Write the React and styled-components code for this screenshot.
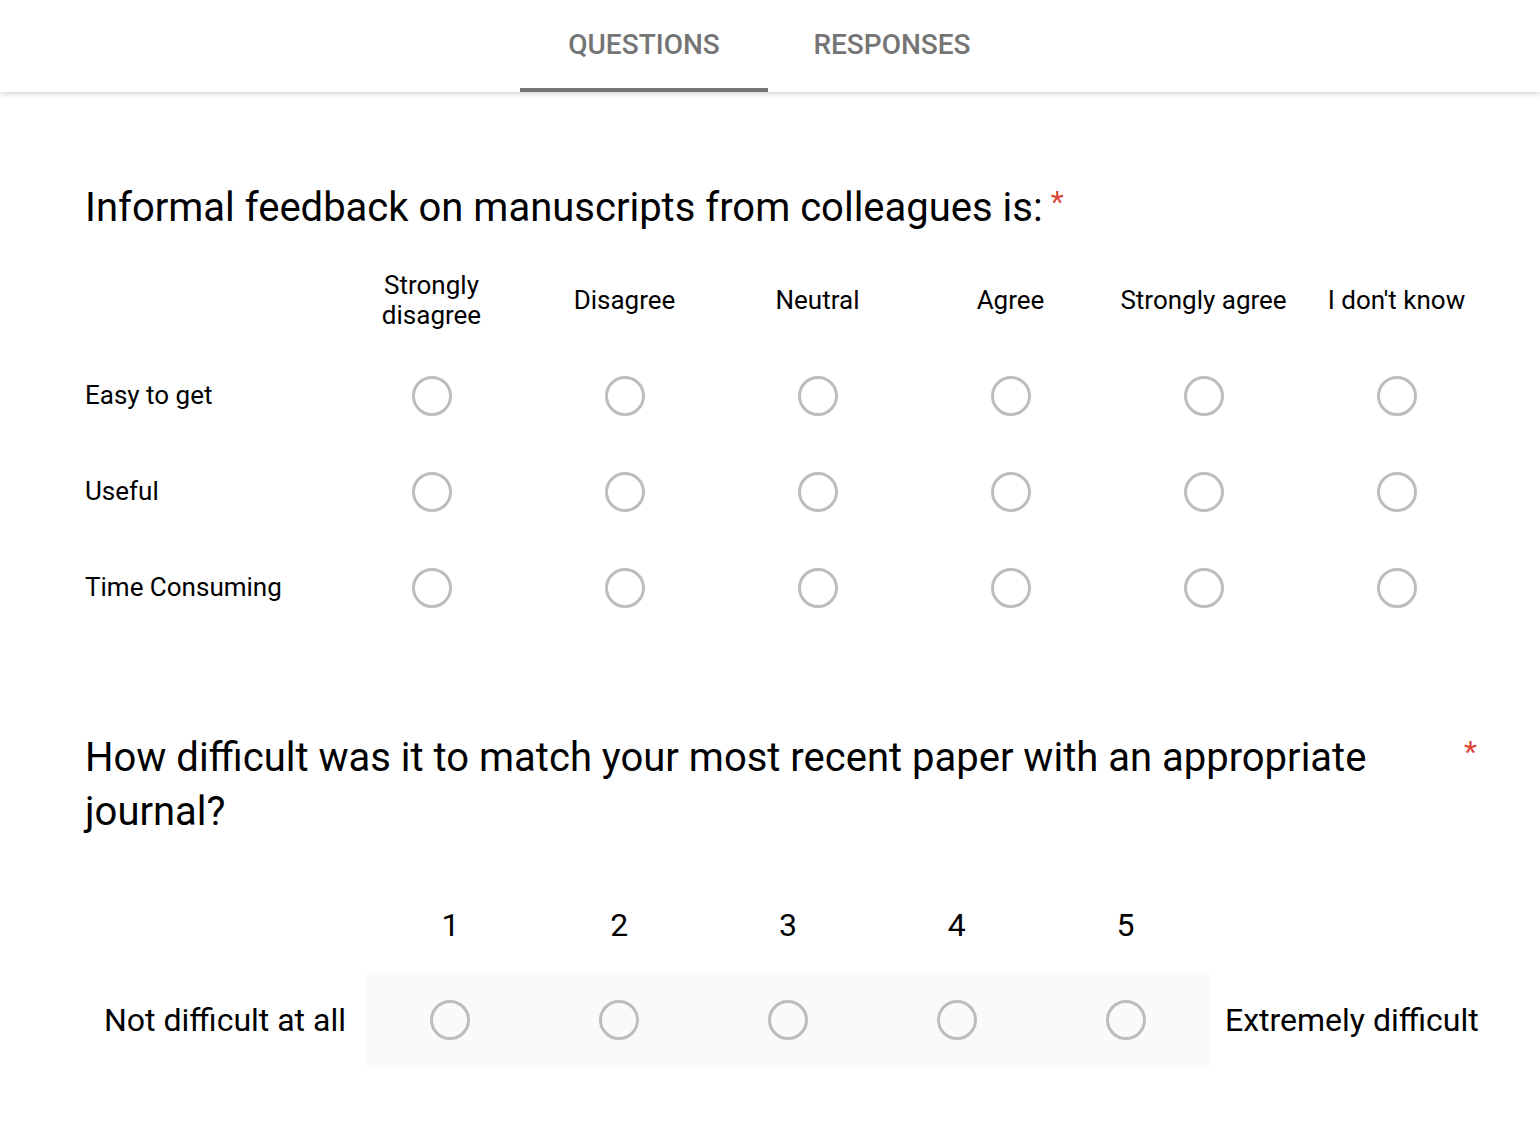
import React from 'react'
import styled, { createGlobalStyle } from 'styled-components'

const GlobalStyle = createGlobalStyle`
  body {
    margin: 0;
    background: #fff;
    font-family: Roboto, "Liberation Sans", sans-serif;
    color: #000;
  }
`

const Page = styled.div`
  width: 1540px;
  min-height: 1124px;
  background: #fff;
`

const Header = styled.div`
  height: 92px;
  display: flex;
  justify-content: center;
  padding-right: 4px;
  box-shadow: 0 2px 5px rgba(0, 0, 0, 0.16);
  position: relative;
  z-index: 1;
`

const Tab = styled.div`
  width: 248px;
  display: flex;
  align-items: center;
  justify-content: center;
  box-sizing: border-box;
  padding-top: 1px;
  font-size: 28px;
  font-weight: 500;
  color: #757575;
  border-bottom: 4px solid ${(p) => (p.$active ? '#757575' : 'transparent')};
`

const Content = styled.div`
  padding: 89px 46px 0 85px;
`

const Title = styled.div`
  display: flex;
  align-items: flex-start;
  font-size: 40px;
  line-height: 54px;
  color: #000;
  padding-right: ${(p) => p.$pad || 0}px;
`

const TitleText = styled.div`
  flex: ${(p) => (p.$grow ? '1' : '0 0 auto')};
`

const Asterisk = styled.span`
  color: #db4437;
  font-size: 30px;
  line-height: 30px;
  margin-left: ${(p) => p.$gap || 8}px;
  margin-top: 6px;
`

const Grid = styled.div`
  margin-top: 17px;
  display: grid;
  grid-template-columns: 250px repeat(6, 193px);
  grid-auto-rows: 96px;
  align-items: center;
`

const ColHead = styled.div`
  text-align: center;
  font-size: 26px;
  line-height: 30px;
`

const RowLabel = styled.div`
  font-size: 26px;
  margin-top: -2px;
`

const Cell = styled.div`
  display: flex;
  justify-content: center;
`

const Radio = styled.div`
  width: 34px;
  height: 34px;
  border-radius: 50%;
  border: 3px solid #bdbdbd;
`

const Section = styled.div`
  margin-top: ${(p) => p.$top}px;
`

const Scale = styled.div`
  margin-top: 39px;
  display: grid;
  grid-template-columns: 281px repeat(5, 168.8px) auto;
`

const Num = styled.div`
  height: 94px;
  display: flex;
  align-items: center;
  justify-content: center;
  font-size: 32px;
`

const ScaleCell = styled.div`
  height: 95px;
  background: #fafafa;
  display: flex;
  align-items: center;
  justify-content: center;
`

const ScaleLabel = styled.div`
  height: 95px;
  display: flex;
  align-items: center;
  font-size: 32px;
  padding: ${(p) => (p.$right ? '0 0 0 15px' : '0 0 0 19px')};
  white-space: nowrap;
`

const cols = ['Strongly disagree', 'Disagree', 'Neutral', 'Agree', 'Strongly agree', "I don't know"]
const rows = ['Easy to get', 'Useful', 'Time Consuming']

export default function App () {
  return (
    <Page>
      <GlobalStyle />
      <Header>
        <Tab $active>QUESTIONS</Tab>
        <Tab>RESPONSES</Tab>
      </Header>
      <Content>
        <Section $top={0}>
          <Title>
            <TitleText>Informal feedback on manuscripts from colleagues is:</TitleText>
            <Asterisk>*</Asterisk>
          </Title>
          <Grid>
            <div />
            {cols.map((c) => (
              <ColHead key={c}>{c === 'Strongly disagree' ? <>Strongly<br />disagree</> : c}</ColHead>
            ))}
            {rows.map((r) => (
              <React.Fragment key={r}>
                <RowLabel>{r}</RowLabel>
                {cols.map((c) => (
                  <Cell key={c}><Radio /></Cell>
                ))}
              </React.Fragment>
            ))}
          </Grid>
        </Section>
        <Section $top={95}>
          <Title $pad={17}>
            <TitleText $grow>How difficult was it to match your most recent paper with an appropriate journal?</TitleText>
            <Asterisk $gap={0}>*</Asterisk>
          </Title>
          <Scale>
            <div />
            {[1, 2, 3, 4, 5].map((n) => <Num key={n}>{n}</Num>)}
            <div />
            <ScaleLabel>Not difficult at all</ScaleLabel>
            {[1, 2, 3, 4, 5].map((n) => (
              <ScaleCell key={n}><Radio /></ScaleCell>
            ))}
            <ScaleLabel $right>Extremely difficult</ScaleLabel>
          </Scale>
        </Section>
      </Content>
    </Page>
  )
}
